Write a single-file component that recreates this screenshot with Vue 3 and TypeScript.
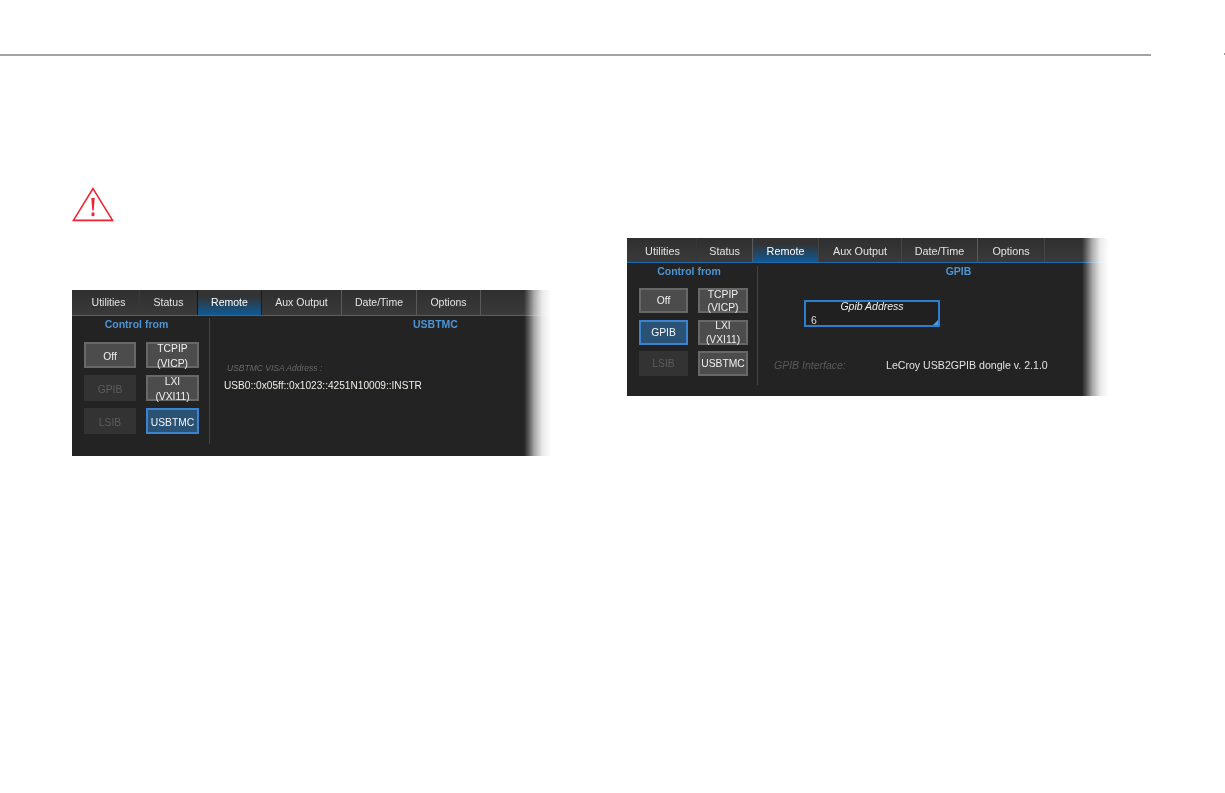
<script setup lang="ts">
interface Tab { label: string; width: number; active?: boolean }
interface Btn { lines: string[]; state?: 'disabled' | 'active' }

const tabLabels = ['Utilities', 'Status', 'Remote', 'Aux Output', 'Date/Time', 'Options']
const makeTabs = (widths: number[]): Tab[] =>
  tabLabels.map((label, i) => ({ label, width: widths[i], active: label === 'Remote' }))

const leftTabs = makeTabs([68, 58, 64, 80, 75, 64])
const rightTabs = makeTabs([70, 56, 66, 83, 76, 67])

const leftBtns: Btn[] = [
  { lines: ['Off'] },
  { lines: ['TCPIP', '(VICP)'] },
  { lines: ['GPIB'], state: 'disabled' },
  { lines: ['LXI', '(VXI11)'] },
  { lines: ['LSIB'], state: 'disabled' },
  { lines: ['USBTMC'], state: 'active' },
]
const rightBtns: Btn[] = [
  { lines: ['Off'] },
  { lines: ['TCPIP', '(VICP)'] },
  { lines: ['GPIB'], state: 'active' },
  { lines: ['LXI', '(VXI11)'] },
  { lines: ['LSIB'], state: 'disabled' },
  { lines: ['USBTMC'] },
]
</script>

<template>
  <div class="page">
    <header class="top">
      <div class="rule"></div>
      <div class="tick"></div>
    </header>

    <main class="columns">
      <section class="col-left">
        <svg class="warn" width="42" height="35" viewBox="0 0 42 35" fill="none">
          <path d="M21 1.6 L40.6 33.4 H1.4 Z" stroke="#ed2233" stroke-width="1.6" stroke-linejoin="miter" />
          <path d="M19.3 11 H22.7 L21.7 23.5 H20.3 Z" fill="#ed2233" />
          <rect x="19.6" y="25.5" width="2.8" height="3.6" fill="#ed2233" />
        </svg>

        <div class="panel panel-a">
          <nav class="tabs">
            <div
              v-for="t in leftTabs"
              :key="t.label"
              class="tab"
              :class="{ active: t.active }"
              :style="{ width: t.width + 'px' }"
            >{{ t.label }}</div>
          </nav>
          <div class="body">
            <div class="control">
              <h3 class="title">Control from</h3>
              <div class="btns">
                <div v-for="b in leftBtns" :key="b.lines[0]" class="btn" :class="b.state">
                  <span v-for="l in b.lines" :key="l">{{ l }}</span>
                </div>
              </div>
            </div>
            <div class="detail">
              <h3 class="title detail-title">USBTMC</h3>
              <div class="visa-label">USBTMC VISA Address :</div>
              <div class="visa-value">USB0::0x05ff::0x1023::4251N10009::INSTR</div>
            </div>
          </div>
        </div>
      </section>

      <section class="col-right">
        <div class="panel panel-b">
          <nav class="tabs">
            <div
              v-for="t in rightTabs"
              :key="t.label"
              class="tab"
              :class="{ active: t.active }"
              :style="{ width: t.width + 'px' }"
            >{{ t.label }}</div>
          </nav>
          <div class="body">
            <div class="control">
              <h3 class="title">Control from</h3>
              <div class="btns">
                <div v-for="b in rightBtns" :key="b.lines[0]" class="btn" :class="b.state">
                  <span v-for="l in b.lines" :key="l">{{ l }}</span>
                </div>
              </div>
            </div>
            <div class="detail">
              <h3 class="title detail-title">GPIB</h3>
              <div class="field">
                <div class="field-label">Gpib Address</div>
                <div class="field-value">6</div>
              </div>
              <div class="iface">
                <span class="iface-label">GPIB Interface:</span>
                <span class="iface-value">LeCroy USB2GPIB dongle v. 2.1.0</span>
              </div>
            </div>
          </div>
        </div>
      </section>
    </main>
  </div>
</template>

<style scoped>
.page {
  width: 1225px;
  height: 793px;
  overflow: hidden;
  background: #fff;
  font-family: "Liberation Sans", Arial, sans-serif;
}
.top {
  display: flex;
  justify-content: space-between;
  align-items: flex-start;
  padding-top: 54px;
  height: 56px;
  box-sizing: border-box;
}
.rule { width: 1151px; height: 2px; background: #a3a3a5; }
.tick { width: 1px; height: 2px; margin-top: -1px; background: #9a9a9a; }

.columns {
  display: flex;
  gap: 76px;
  padding-left: 72px;
}
.col-left { width: 479px; padding-top: 131px; }
.col-right { width: 482px; padding-top: 182px; }

.warn { display: block; margin-bottom: 68px; }

.panel {
  position: relative;
  background: #232323;
  color: #e6e6e6;
  font-size: 10.5px;
  filter: blur(0.35px);
}
.panel::after {
  content: "";
  position: absolute;
  top: 0;
  right: 0;
  bottom: 0;
  width: 27px;
  background: linear-gradient(to right, rgba(255,255,255,0), rgba(255,255,255,0.22) 15%, rgba(255,255,255,0.6) 38%, rgba(255,255,255,0.9) 68%, #fff 100%);
}
.panel-a { height: 166px; }
.panel-b { height: 158px; }

.tabs {
  display: flex;
  height: 26px;
  box-sizing: border-box;
  border-bottom: 1px solid #1f6db0;
  background: linear-gradient(to bottom, #2f2f2f, #3a3a3a);
}
.panel-b .tabs { height: 25px; }
.tab {
  display: flex;
  align-items: center;
  justify-content: center;
  box-sizing: border-box;
  border-right: 1px solid #5a5a5a;
  color: #e4e4e4;
  padding-bottom: 2px;
}
.panel-b .tab { padding-bottom: 0; padding-top: 1px; font-size: 10.8px; border-right-color: #454545; }
.tab:first-child { border-right-color: #383838; padding-left: 6px; }
.panel-b .tab:first-child { padding-left: 2px; border-right-color: #363636; }
.tab:nth-child(2) { border-right-color: #151515; }
.panel-b .tab:nth-child(2) { border-right-color: #5a5a5a; }
.panel-b .tab:nth-child(5) { border-right-color: #5a5a5a; }
.tab.active {
  background: linear-gradient(to bottom, #333 25%, #0f5a96 100%);
  border-right-color: #1a1a1a;
  color: #fff;
}
.panel-b .tab.active { border-right-color: #444; }

.body { display: flex; }
.control {
  box-sizing: border-box;
  width: 138px;
  border-right: 1px solid #444;
  margin-top: 2px;
  height: 126px;
  flex: none;
}
.panel-b .control { width: 131px; height: 119px; margin-top: 3px; }

.title {
  margin: 0;
  font-size: 10.5px;
  font-weight: 700;
  color: #4c95d6;
  text-align: center;
  line-height: 12px;
  padding-right: 8px;
}
.panel-b .title { margin-top: -1px; padding-right: 6px; }

.btns {
  display: grid;
  grid-template-columns: 52px 53px;
  grid-auto-rows: 26px;
  column-gap: 10px;
  row-gap: 7px;
  margin: 12px 0 0 12px;
}
.panel-b .btns {
  grid-template-columns: 49px 50px;
  grid-auto-rows: 25px;
  row-gap: 6.5px;
  margin: 11px 0 0 12px;
}
.btn {
  box-sizing: border-box;
  display: flex;
  flex-direction: column;
  align-items: center;
  justify-content: center;
  padding-top: 2px;
  background: #4c4c4c;
  border: 2px solid #686868;
  color: #f0f0f0;
  line-height: 15px;
  font-size: 10.3px;
  white-space: nowrap;
}
.panel-b .btn { line-height: 13.5px; padding-top: 1px; }
.btn.disabled { background: #333; border-color: #333; color: #5c5c5c; }
.btn.active { background: #2a5275; border-color: #3b83cf; color: #f5f5f5; }

.detail { flex: 1; position: relative; min-width: 0; }
.detail-title {
  padding-top: 2px;
  padding-left: 110px;
  padding-right: 0;
}
.panel-b .detail-title { margin-top: 0; padding-top: 2px; padding-left: 50px; padding-right: 0; }

.visa-label {
  margin: 32px 0 0 17px;
  font-size: 8.5px;
  font-style: italic;
  color: #686868;
  line-height: 12px;
}
.visa-value {
  margin: 6px 0 0 14px;
  font-size: 10.15px;
  color: #efefe6;
  line-height: 12px;
  white-space: nowrap;
}

.field {
  position: relative;
  box-sizing: border-box;
  width: 136px;
  height: 27px;
  margin: 23px 0 0 46px;
  border: 2px solid #2b7fd0;
  background: #202020;
}
.field::after {
  content: "";
  position: absolute;
  right: 0;
  bottom: 0;
  border-style: solid;
  border-width: 0 0 5px 5px;
  border-color: transparent transparent #4c9be6 transparent;
}
.field-label {
  font-style: italic;
  text-align: center;
  color: #eee;
  line-height: 11px;
  margin-top: -1px;
}
.field-value {
  margin-left: 5px;
  line-height: 12px;
  margin-top: 2px;
  color: #ddd;
}
.iface {
  display: flex;
  margin: 32px 0 0 16px;
  line-height: 12px;
}
.iface-label {
  width: 112px;
  font-style: italic;
  color: #5a5a5a;
}
.iface-value { color: #e2e2e2; white-space: nowrap; font-size: 10.6px; }
</style>

<style>
html, body { margin: 0; background: #fff; }
</style>
